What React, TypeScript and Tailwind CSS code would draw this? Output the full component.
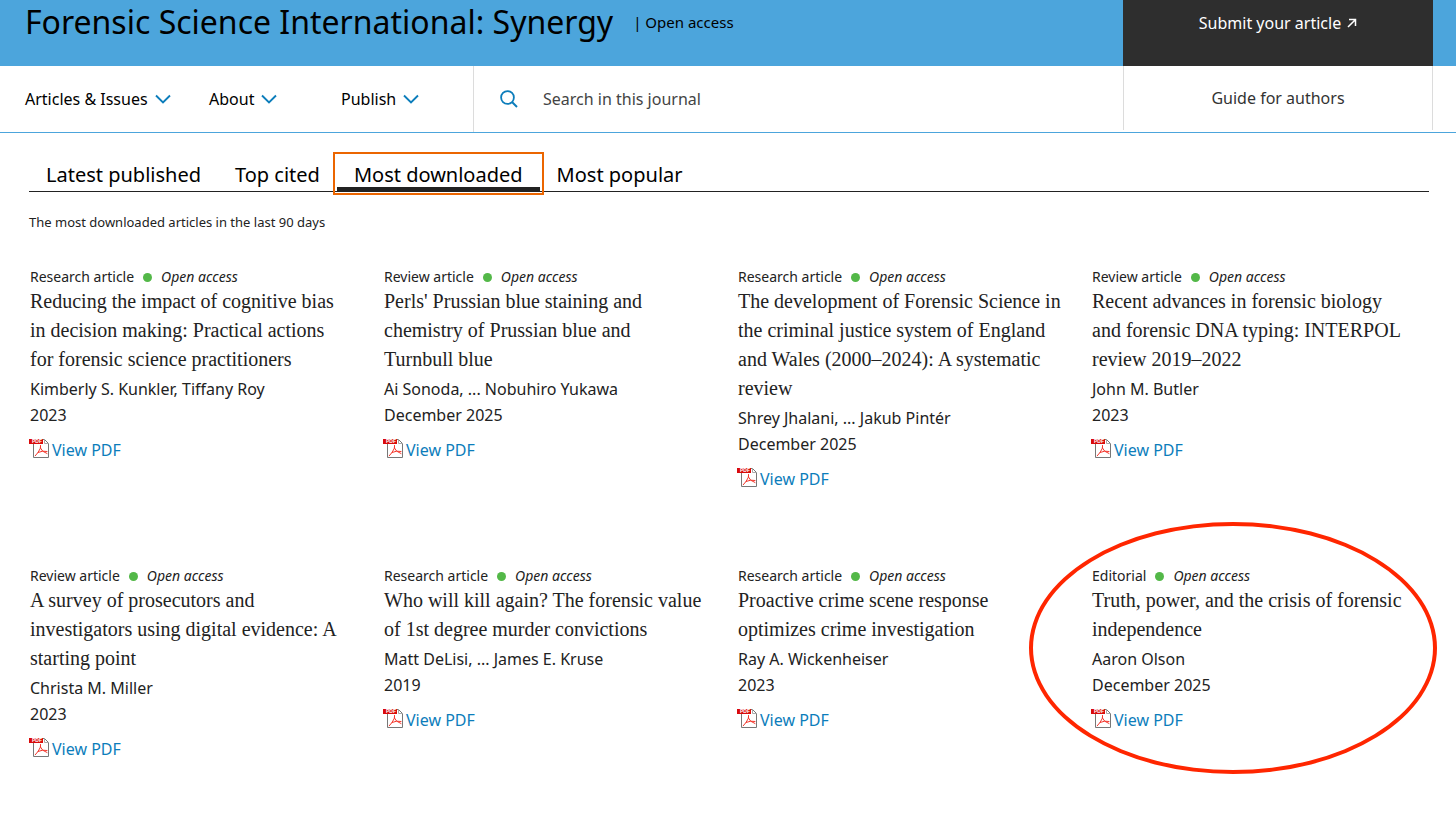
import { useState } from "react";

type Article = {
  type: string;
  title: string;
  authors: string;
  date: string;
  circled?: boolean;
};

const TABS = ["Latest published", "Top cited", "Most downloaded", "Most popular"];

const ARTICLES: Article[] = [
  {
    type: "Research article",
    title:
      "Reducing the impact of cognitive bias\nin decision making: Practical actions\nfor forensic science practitioners",
    authors: "Kimberly S. Kunkler, Tiffany Roy",
    date: "2023",
  },
  {
    type: "Review article",
    title:
      "Perls' Prussian blue staining and\nchemistry of Prussian blue and\nTurnbull blue",
    authors: "Ai Sonoda, ... Nobuhiro Yukawa",
    date: "December 2025",
  },
  {
    type: "Research article",
    title:
      "The development of Forensic Science in\nthe criminal justice system of England\nand Wales (2000–2024): A systematic\nreview",
    authors: "Shrey Jhalani, ... Jakub Pintér",
    date: "December 2025",
  },
  {
    type: "Review article",
    title:
      "Recent advances in forensic biology\nand forensic DNA typing: INTERPOL\nreview 2019–2022",
    authors: "John M. Butler",
    date: "2023",
  },
  {
    type: "Review article",
    title:
      "A survey of prosecutors and\ninvestigators using digital evidence: A\nstarting point",
    authors: "Christa M. Miller",
    date: "2023",
  },
  {
    type: "Research article",
    title:
      "Who will kill again? The forensic value\nof 1st degree murder convictions",
    authors: "Matt DeLisi, ... James E. Kruse",
    date: "2019",
  },
  {
    type: "Research article",
    title: "Proactive crime scene response\noptimizes crime investigation",
    authors: "Ray A. Wickenheiser",
    date: "2023",
  },
  {
    type: "Editorial",
    title: "Truth, power, and the crisis of forensic\nindependence",
    authors: "Aaron Olson",
    date: "December 2025",
    circled: true,
  },
];

const ChevronIcon = () => (
  <svg width="16" height="10" viewBox="0 0 16 10" fill="none" aria-hidden="true">
    <path d="M1 1.5 8 8.5 15 1.5" stroke="#0c7dbb" strokeWidth="1.9" />
  </svg>
);

const SearchIcon = () => (
  <svg width="18" height="18" viewBox="0 0 18 18" fill="none" aria-hidden="true">
    <circle cx="7.5" cy="7.5" r="6.4" stroke="#0c7dbb" strokeWidth="1.8" />
    <path d="m12 12 5 5" stroke="#0c7dbb" strokeWidth="2" />
  </svg>
);

const PdfIcon = () => (
  <svg
    className="mt-px"
    width="21"
    height="21"
    viewBox="0 0 21 21"
    fill="none"
    aria-hidden="true"
  >
    <path d="M4.5 5V1.5h11l4 4v14h-15V5" fill="#fff" stroke="#777" />
    <path d="M15.5 1.5v4h4" stroke="#aaa" />
    <path
      d="M11.5 7.500v2.500L9 14.500 6.200 17.800M11.500 10l2.200 3.200 4.300 2.300M9 14.500l4.700-1.300 4.300.3"
      stroke="#f3372c"
      strokeLinecap="round"
      strokeLinejoin="round"
    />
    <rect x="0" y="1" width="14" height="5" fill="#d90b0b" />
    <text
      x="3"
      y="5.2"
      fill="#fff"
      fontSize="5"
      fontWeight="700"
      fontFamily="Liberation Sans, sans-serif"
    >
      PDF
    </text>
  </svg>
);

const ArticleCard = ({ article }: { article: Article }) => (
  <li className="relative">
    <div className="flex items-center text-sm leading-5">
      <span>{article.type}</span>
      <span className="mx-[9px] h-[9px] w-[9px] rounded-full bg-[#53b848]" />
      <span className="italic">Open access</span>
    </div>
    <h3 className="whitespace-pre-line font-['Liberation_Serif',serif] text-[20px] leading-[29px]">
      {article.title}
    </h3>
    <p className="mt-[2px] text-base leading-[26px]">{article.authors}</p>
    <p className="text-base leading-[26px]">{article.date}</p>
    <a
      href="#"
      className="-ml-px mt-[9px] flex w-fit items-start gap-[2px] text-base leading-[26px] text-[#0c7dbb]"
    >
      <PdfIcon />
      View PDF
    </a>
    {article.circled && (
      <span className="pointer-events-none absolute -left-[63px] -top-11 h-[252px] w-[408px] rounded-[50%] border-4 border-[#ff2600]" />
    )}
  </li>
);

export default function App() {
  const [active, setActive] = useState("Most downloaded");

  return (
    <div className="min-h-screen overflow-x-hidden bg-white font-['Noto_Sans',sans-serif] text-[#222]">
      <header>
        <div className="flex h-[66px] bg-[#4ca5dc] pr-[23px] text-black">
          <div className="flex h-11 flex-1 items-center gap-5 pl-[25px]">
            <h1 className="text-[32px]">Forensic Science International: Synergy</h1>
            <span className="text-[15px]">| Open access</span>
          </div>
          <a
            href="#"
            className="flex w-[310px] justify-center gap-[6px] bg-[#2e2e2e] pt-[10px] text-base leading-[26px] text-white"
          >
            Submit your article
            <svg className="mt-2" width="10" height="10" viewBox="0 0 10 10" fill="none" aria-hidden="true">
              <path d="M1 9 8.3 1.700M2 1.500h6.500V8" stroke="#fff" strokeWidth="1.5" />
            </svg>
          </a>
        </div>
        <div className="flex h-[67px] border-b border-[#4ca5dc] pr-[23px] text-base">
          <nav className="grid w-[474px] grid-cols-[184px_132px_1fr] border-r border-[#dcdcdc] pl-[25px] text-black">
            {["Articles & Issues", "About", "Publish"].map((label) => (
              <button key={label} type="button" className="flex items-center gap-[7px]">
                {label}
                <ChevronIcon />
              </button>
            ))}
          </nav>
          <label className="flex flex-1 items-center gap-[25px] pl-[26px]">
            <SearchIcon />
            <input
              type="search"
              aria-label="Search in this journal"
              placeholder="Search in this journal"
              className="flex-1 outline-none placeholder:text-[#444]"
            />
          </label>
          <a
            href="#"
            className="flex h-16 w-[310px] items-center justify-center border-x border-[#dcdcdc] text-[#333]"
          >
            Guide for authors
          </a>
        </div>
      </header>

      <main className="pl-[29px] pr-[27px] pt-[23px]">
        <div role="tablist" className="flex border-b border-[#222]">
          {TABS.map((tab) => (
            <button
              key={tab}
              type="button"
              role="tab"
              aria-selected={tab === active}
              onClick={() => setActive(tab)}
              className={`h-[35px] border-b-4 px-[17px] pt-[7px] text-[20px] leading-6 text-black ${
                tab === active
                  ? "border-[#222] outline-2 outline-offset-2 outline-[#eb6500]"
                  : "border-transparent"
              }`}
            >
              {tab}
            </button>
          ))}
        </div>
        <p className="mt-5 text-[13px] leading-5">
          The most downloaded articles in the last 90 days
        </p>
        <ul className="mt-[35px] grid grid-cols-4 gap-x-[17px] gap-y-[74px] pl-px">
          {ARTICLES.map((article) => (
            <ArticleCard key={article.title} article={article} />
          ))}
        </ul>
      </main>
    </div>
  );
}
